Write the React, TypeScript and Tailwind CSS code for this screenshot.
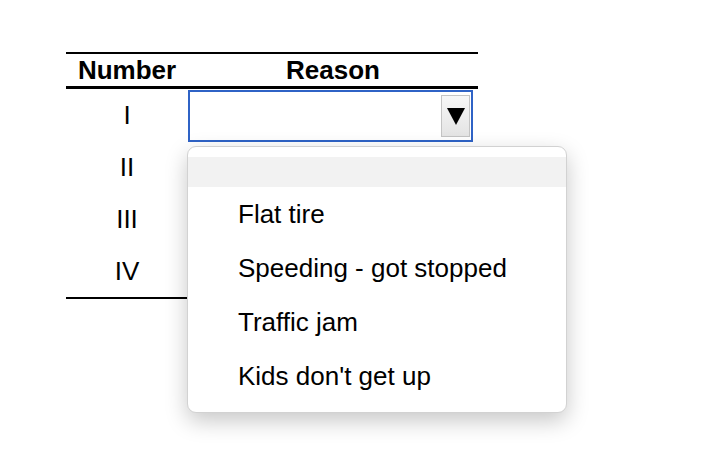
import React from 'react';

const ROWS = ['I', 'II', 'III', 'IV'];
const OPTIONS = ['Flat tire', 'Speeding - got stopped', 'Traffic jam', "Kids don't get up"];

export default function App() {
  return (
    <div className="w-[716px] h-[450px] bg-white overflow-hidden font-['Liberation_Sans',Arial,sans-serif] text-black">
      <div className="pt-[52px] pl-[66px]">
        <div className="w-[412px] border-t-2 border-black">
          {/* Header */}
          <div className="grid grid-cols-[122px_290px] h-[35px] border-b-[3px] border-black text-[26px] font-bold leading-[32px]">
            <div className="text-center">Number</div>
            <div className="text-center">Reason</div>
          </div>

          {/* Rows */}
          <div className="border-b-2 border-black">
            {ROWS.map((r, i) => (
              <div key={r} className="grid grid-cols-[122px_290px] h-[52px] text-[26px]">
                <div className="flex items-center justify-center">{r}</div>
                <div className="relative">
                  {i === 0 && (
                    <>
                      <div className="mt-px w-[285px] h-[52px] border-2 border-[#2f63c6] flex items-center justify-end pr-[1px] bg-white">
                        <div className="w-[29px] h-[42px] border border-[#c4c4c4] bg-gradient-to-b from-[#f7f7f7] to-[#e4e4e4] flex items-center justify-center">
                          <svg width="18" height="18" viewBox="0 0 18 18">
                            <path d="M0 1 H18 L9 18 Z" fill="#000" />
                          </svg>
                        </div>
                      </div>
                      {/* Open dropdown list */}
                      <div className="absolute z-10 left-[-1px] top-[57px] w-[380px] h-[267px] bg-white border border-[#d2d2d2] rounded-[9px] shadow-[0_8px_22px_rgba(0,0,0,0.22)] pt-[10px]">
                        <div className="h-[30px] bg-[#f2f2f2]"></div>
                        {OPTIONS.map(o => (
                          <div key={o} className="h-[54px] flex items-center pl-[50px] text-[26px] whitespace-nowrap">
                            {o}
                          </div>
                        ))}
                      </div>
                    </>
                  )}
                </div>
              </div>
            ))}
          </div>
        </div>
      </div>
    </div>
  );
}
